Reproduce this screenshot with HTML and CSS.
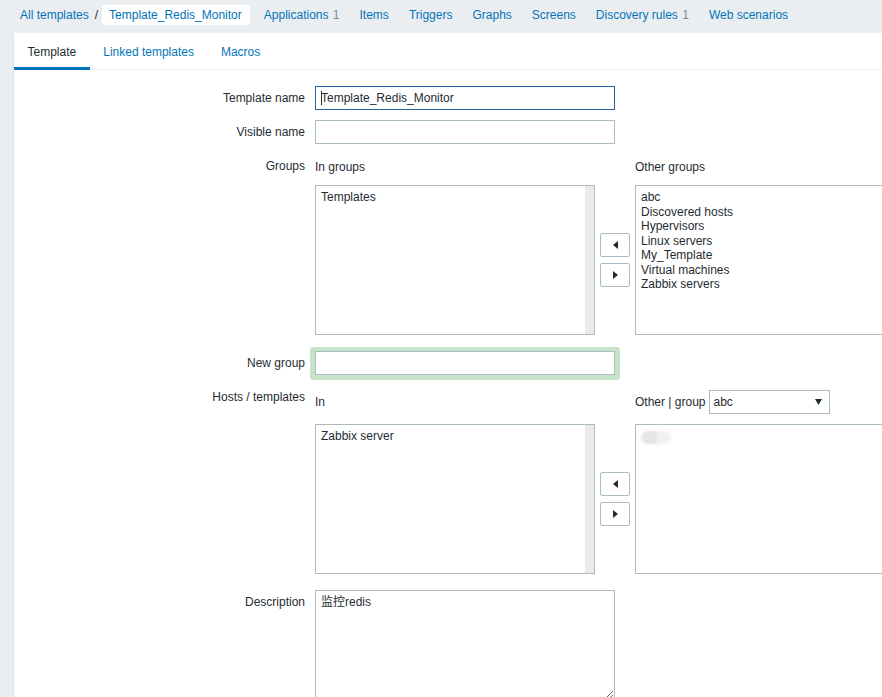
FILE: index.html
```html
<!DOCTYPE html>
<html lang="en">
<head>
<meta charset="utf-8">
<title>Template_Redis_Monitor</title>
<link rel="stylesheet" href="styles.css">
</head>
<body>
<nav class="topnav">
  <div class="crumbs">
    <a class="link" href="#">All templates</a>
    <span class="sep">/</span>
    <span class="crumb-current">Template_Redis_Monitor</span>
  </div>
  <ul class="navlinks">
    <li><a class="link" href="#">Applications</a> <span class="count">1</span></li>
    <li><a class="link" href="#">Items</a></li>
    <li><a class="link" href="#">Triggers</a></li>
    <li><a class="link" href="#">Graphs</a></li>
    <li><a class="link" href="#">Screens</a></li>
    <li><a class="link" href="#">Discovery rules</a> <span class="count">1</span></li>
    <li><a class="link" href="#">Web scenarios</a></li>
  </ul>
</nav>

<main class="panel">
  <ul class="tabs">
    <li class="tab tab-active">Template</li>
    <li class="tab"><a class="link" href="#">Linked templates</a></li>
    <li class="tab"><a class="link" href="#">Macros</a></li>
  </ul>

  <form class="form">
    <label class="label">Template name</label>
    <div class="field">
      <div class="caret-wrap"><input class="text-input focused" type="text" value="Template_Redis_Monitor"></div>
    </div>

    <label class="label">Visible name</label>
    <div class="field"><input class="text-input" type="text" value=""></div>

    <label class="label">Groups</label>
    <div class="field">
      <div class="twin twin-groups">
        <div class="twin-head">In groups</div>
        <div></div>
        <div class="twin-head">Other groups</div>

        <div class="listbox scrolled">
          <div class="opt">Templates</div>
        </div>
        <div class="movers">
          <button class="mover" type="button"><svg width="5" height="8" viewBox="0 0 5 8"><polygon points="5,0 5,8 0,4" fill="#1f2c33"/></svg></button>
          <button class="mover" type="button"><svg width="5" height="8" viewBox="0 0 5 8"><polygon points="0,0 0,8 5,4" fill="#1f2c33"/></svg></button>
        </div>
        <div class="listbox">
          <div class="opt">abc</div>
          <div class="opt">Discovered hosts</div>
          <div class="opt">Hypervisors</div>
          <div class="opt">Linux servers</div>
          <div class="opt">My_Template</div>
          <div class="opt">Virtual machines</div>
          <div class="opt">Zabbix servers</div>
        </div>
      </div>
    </div>

    <label class="label">New group</label>
    <div class="field">
      <div class="highlight"><input class="text-input" type="text" value=""></div>
    </div>

    <label class="label">Hosts / templates</label>
    <div class="field">
      <div class="twin twin-hosts">
        <div class="twin-head">In</div>
        <div></div>
        <div class="twin-head">
          <span>Other | group</span>
          <div class="select"><span>abc</span><svg width="7" height="6" viewBox="0 0 7 6"><polygon points="0,0 7,0 3.5,6" fill="#1f2c33"/></svg></div>
        </div>

        <div class="listbox scrolled">
          <div class="opt">Zabbix server</div>
        </div>
        <div class="movers">
          <button class="mover" type="button"><svg width="5" height="8" viewBox="0 0 5 8"><polygon points="5,0 5,8 0,4" fill="#1f2c33"/></svg></button>
          <button class="mover" type="button"><svg width="5" height="8" viewBox="0 0 5 8"><polygon points="0,0 0,8 5,4" fill="#1f2c33"/></svg></button>
        </div>
        <div class="listbox">
          <div class="opt"><span class="smudge"></span></div>
        </div>
      </div>
    </div>

    <label class="label">Description</label>
    <div class="field"><textarea class="textarea">监控redis</textarea></div>
  </form>
</main>
</body>
</html>
```

FILE: styles.css
```css
html, body {
  margin: 0;
  padding: 0;
  overflow: hidden;
}

body {
  background: #ebeef1;
  font-family: "Liberation Sans", Arial, "Noto Sans CJK SC", sans-serif;
  font-size: 12px;
  color: #1f2c33;
  width: 882px;
  height: 697px;
}

.link {
  color: #0275b8;
  text-decoration: none;
}

/* top navigation */
.topnav {
  box-sizing: border-box;
  height: 33px;
  display: flex;
  align-items: flex-start;
  padding: 5px 0 0 20px;
  white-space: nowrap;
  line-height: 20px;
}

.crumbs {
  display: flex;
  align-items: center;
}

.sep {
  margin: 0 4px 0 6px;
  color: #1f2c33;
}

.crumb-current {
  background: #fff;
  color: #0275b8;
  height: 20px;
  line-height: 20px;
  padding: 0 8px 0 7px;
  border-radius: 2px;
}

.navlinks {
  display: flex;
  list-style: none;
  margin: 0 0 0 14px;
  padding: 0;
  gap: 20px;
}

.count {
  color: #768d99;
  margin-left: 1px;
}

/* panel */
.panel {
  margin-left: 13px;
  border-left: 1px solid #dde3e7;
  background: #fff;
  height: 664px;
  width: 900px;
}

.tabs {
  display: flex;
  list-style: none;
  margin: 0;
  padding: 0;
  border-bottom: 1px solid #ebeef1;
}

.tab {
  padding: 12px 13.5px 8px;
  line-height: 14px;
  border-bottom: 3px solid transparent;
  margin-bottom: -1px;
}

.tab-active {
  border-bottom-color: #0275b8;
  color: #1f2c33;
}

/* form */
.form {
  display: grid;
  grid-template-columns: 291px 1fr;
  column-gap: 10px;
  row-gap: 10px;
  padding-top: 16px;
}

.label {
  text-align: right;
  padding-top: 5px;
  line-height: 14px;
  white-space: nowrap;
}

.field {
  min-width: 0;
}

.text-input {
  box-sizing: border-box;
  display: block;
  width: 300px;
  height: 24px;
  margin: 0;
  padding: 0 5px;
  border: 1px solid #acbbc2;
  border-radius: 0;
  font-family: inherit;
  font-size: 12px;
  color: #1f2c33;
  background: #fff;
  outline: none;
}

.text-input.focused {
  border-color: #1f65a6;
}

.caret-wrap {
  position: relative;
  width: 300px;
}

.caret-wrap::before {
  content: "";
  position: absolute;
  left: 6px;
  top: 5px;
  width: 1px;
  height: 14px;
  background: #1f2c33;
}

.highlight {
  display: inline-block;
  margin: -4px -5px -5px;
  padding: 4px 5px 5px;
  background: #c6e4c8;
  border-radius: 3px;
}

/* twin list boxes */
.twin {
  display: grid;
  grid-template-columns: 280px 40px 280px;
  margin-bottom: 6px;
}

.twin-groups {
  grid-template-rows: 31px 150px;
}

.twin-hosts {
  grid-template-rows: 39px 150px;
}

.twin-head {
  line-height: 14px;
  padding-top: 6px;
  white-space: nowrap;
}

.twin-hosts .twin-head {
  display: flex;
  align-items: center;
  height: 24px;
  padding-top: 5px;
  gap: 3px;
}

.select {
  box-sizing: border-box;
  width: 121px;
  height: 24px;
  border: 1px solid #acbbc2;
  display: flex;
  align-items: center;
  justify-content: space-between;
  padding: 0 7px 0 4px;
  background: #fff;
}

.listbox {
  box-sizing: border-box;
  height: 150px;
  border: 1px solid #acbbc2;
  padding: 4px 5px 3px;
  overflow: hidden;
  background: #fff;
}

.listbox.scrolled {
  background: linear-gradient(to left, #ebebeb 9px, #fff 9px);
}

.opt {
  line-height: 14.5px;
  white-space: nowrap;
}

.movers {
  display: flex;
  flex-direction: column;
  align-items: center;
  justify-content: center;
  gap: 6px;
}

.mover {
  box-sizing: border-box;
  width: 30px;
  height: 24px;
  border: 1px solid #acbbc2;
  border-radius: 2px;
  background: #fff;
  padding: 0;
  margin: 0;
  display: flex;
  align-items: center;
  justify-content: center;
}

.smudge {
  display: inline-block;
  width: 30px;
  height: 13px;
  margin-top: 2px;
  border-radius: 7px;
  background: linear-gradient(to right, #e6e6e6 0 55%, #f1f1f1 55%);
  filter: blur(1px);
}

.textarea {
  box-sizing: border-box;
  display: block;
  width: 300px;
  height: 110px;
  margin: 0;
  padding: 4px 5px 3px;
  border: 1px solid #acbbc2;
  border-radius: 0;
  font-family: "Liberation Sans", Arial, "Noto Sans CJK SC", sans-serif;
  font-size: 12px;
  line-height: 14px;
  color: #1f2c33;
  resize: vertical;
  outline: none;
}
```
